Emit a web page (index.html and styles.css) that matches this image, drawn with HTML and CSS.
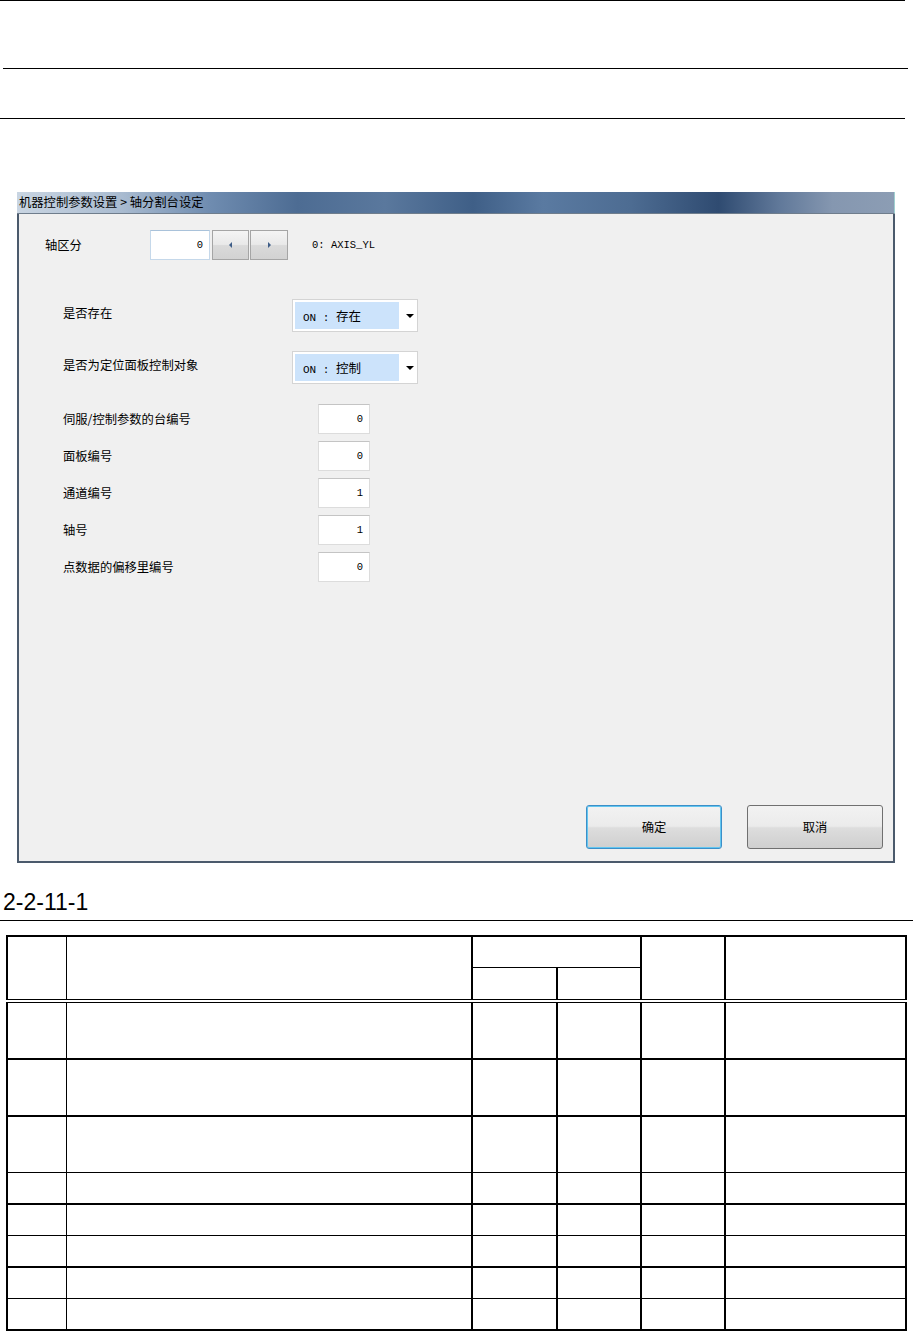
FILE: index.html
```html
<!DOCTYPE html>
<html lang="zh-CN">
<head>
  <meta charset="UTF-8">
  <title>轴分割台设定</title>
  <link rel="stylesheet" href="styles.css">
</head>
<body>
  <div class="rule rule-a"></div>
  <div class="rule rule-b"></div>
  <div class="rule rule-c"></div>

  <div class="dialog">
    <div class="titlebar">机器控制参数设置 &gt; 轴分割台设定</div>
    <div class="dlg-body">
      <div class="axis-row">
        <span class="lbl">轴区分</span>
        <div class="num-input axis-input">0</div>
        <button class="spin"><span class="tri tri-left"></span></button>
        <button class="spin"><span class="tri tri-right"></span></button>
        <span class="axis-name mono">0: AXIS_YL</span>
      </div>

      <div class="sel-row">
        <span class="lbl">是否存在</span>
        <div class="select">
          <div class="value"><span class="mono">ON : </span>存在</div>
          <div class="caret"></div>
        </div>
      </div>
      <div class="sel-row">
        <span class="lbl">是否为定位面板控制对象</span>
        <div class="select">
          <div class="value"><span class="mono">ON : </span>控制</div>
          <div class="caret"></div>
        </div>
      </div>

      <div class="fields">
        <div class="field"><span class="lbl">伺服/控制参数的台编号</span><div class="num-input small">0</div></div>
        <div class="field"><span class="lbl">面板编号</span><div class="num-input small">0</div></div>
        <div class="field"><span class="lbl">通道编号</span><div class="num-input small">1</div></div>
        <div class="field"><span class="lbl">轴号</span><div class="num-input small">1</div></div>
        <div class="field"><span class="lbl">点数据的偏移里编号</span><div class="num-input small">0</div></div>
      </div>

      <div class="actions">
        <button class="btn btn-default">确定</button>
        <button class="btn">取消</button>
      </div>
    </div>
  </div>

  <h3 class="fig-title">2-2-11-1</h3>
  <div class="rule rule-full"></div>

  <table class="spec">
    <colgroup>
      <col style="width:59px"><col style="width:406px"><col style="width:85px">
      <col style="width:84px"><col style="width:84px"><col>
    </colgroup>
    <thead>
      <tr class="h1"><th rowspan="2"></th><th rowspan="2"></th><th colspan="2"></th><th rowspan="2"></th><th rowspan="2"></th></tr>
      <tr class="h2"><th></th><th></th></tr>
    </thead>
    <tbody>
      <tr class="tall thick"><td></td><td></td><td></td><td></td><td></td><td></td></tr>
      <tr class="tall thick"><td></td><td></td><td></td><td></td><td></td><td></td></tr>
      <tr class="tall thick"><td></td><td></td><td></td><td></td><td></td><td></td></tr>
      <tr class="short"><td></td><td></td><td></td><td></td><td></td><td></td></tr>
      <tr class="short thick"><td></td><td></td><td></td><td></td><td></td><td></td></tr>
      <tr class="short"><td></td><td></td><td></td><td></td><td></td><td></td></tr>
      <tr class="short thick"><td></td><td></td><td></td><td></td><td></td><td></td></tr>
      <tr class="short"><td></td><td></td><td></td><td></td><td></td><td></td></tr>
    </tbody>
  </table>
</body>
</html>
```

FILE: styles.css
```css
body {
  margin: 0;
  background: #fff;
  color: #000;
  font-family: "Liberation Sans", "Noto Sans CJK SC", sans-serif;
}

.rule {
  height: 1px;
  background: #000;
}
.rule-a { width: 905px; }
.rule-b { width: 905px; margin: 67px 0 0 3px; }
.rule-c { width: 905px; margin-top: 49px; }
.rule-full { width: 913px; margin-top: 5px; }

/* dialog window */
.dialog {
  width: 878px;
  margin: 73px 0 0 17px;
  font-family: "Noto Sans CJK SC", sans-serif;
  font-size: 12.3px;
}
.titlebar {
  height: 21px;
  line-height: 21px;
  padding-left: 2px;
  border-bottom: 1px solid #6f7d8c;
  border-right: 1px solid #9fd0d0;
  background: linear-gradient(to right, #c9d5e2 0%, #a9bbd0 12%, #6f8cb0 22%, #4d6c93 32%, #5a789d 42%, #3f5f87 52%, #5a7aa1 60%, #4d6c92 70%, #2f4b71 80%, #61799a 87%, #8597b0 93%, #8c9db4 100%);
}
.dlg-body {
  height: 649px;
  box-sizing: border-box;
  display: flex;
  flex-direction: column;
  padding: 16px 10px 12px 0;
  background: #f0f0f0;
  border: 2px solid #4b5a6c;
  border-top: none;
}

.mono {
  font-family: "Liberation Mono", "Noto Sans CJK SC", monospace;
  font-size: 10.5px;
}

.axis-row {
  display: flex;
  align-items: center;
  height: 30px;
  padding-left: 26px;
}
.axis-row .lbl { width: 105px; }

.num-input {
  box-sizing: border-box;
  height: 30px;
  padding-right: 6px;
  background: #fff;
  border: 1px solid #dcdcdc;
  border-top-color: #c4c4c4;
  text-align: right;
  line-height: 28px;
  font-family: "Liberation Mono", monospace;
  font-size: 10.5px;
}
.axis-input {
  width: 60px;
  border-color: #c5d8ea;
  border-top-color: #a9c2da;
}
.num-input.small { width: 52px; }

.spin {
  width: 37px;
  height: 30px;
  margin-left: 2px;
  padding: 0;
  display: flex;
  align-items: center;
  justify-content: center;
  border: 1px solid #a5a5a5;
  background: linear-gradient(#f4f4f4, #e9e9e9 48%, #dadada 52%, #d2d2d2);
}
.spin + .spin { margin-left: 1px; width: 38px; }
.tri {
  width: 0;
  height: 0;
  border-top: 3px solid transparent;
  border-bottom: 3px solid transparent;
}
.tri-left { border-right: 3px solid #3f5e88; }
.tri-right { border-left: 3px solid #3f5e88; }
.axis-name { margin-left: 24px; }

.sel-row {
  display: flex;
  align-items: center;
  padding-left: 44px;
  margin-top: 39px;
}
.sel-row + .sel-row { margin-top: 19px; }
.sel-row .lbl { width: 229px; margin-bottom: 6px; }
.select {
  box-sizing: border-box;
  width: 126px;
  height: 33px;
  padding: 2px;
  display: flex;
  background: #fff;
  border: 1px solid #d4d4d4;
}
.select .value {
  width: 96px;
  padding-left: 8px;
  line-height: 27px;
  background: #cce3fb;
  font-size: 12.5px;
}
.select .value .mono { font-size: 11px; }
.select .caret {
  flex: 1;
  position: relative;
}
.select .caret::after {
  content: "";
  position: absolute;
  left: 7px;
  top: 12px;
  border-left: 4px solid transparent;
  border-right: 4px solid transparent;
  border-top: 4px solid #000;
}

.fields {
  display: flex;
  flex-direction: column;
  gap: 7px;
  margin-top: 20px;
  padding-left: 44px;
}
.field {
  display: flex;
  align-items: center;
}
.field .lbl { width: 255px; }

.actions {
  margin-top: auto;
  display: flex;
  justify-content: flex-end;
  gap: 25px;
}
.btn {
  width: 136px;
  height: 44px;
  border: 1px solid #707070;
  border-radius: 3px;
  background: linear-gradient(#f2f2f2, #ebebeb 48%, #dddddd 52%, #cfcfcf);
  font-family: "Noto Sans CJK SC", sans-serif;
  font-size: 12.3px;
  color: #000;
}
.btn-default {
  border-color: #3c8fc8;
  box-shadow: inset 0 0 0 1px #62c6f0;
}

/* figure + table */
.fig-title {
  margin: 26px 0 0 3px;
  font-family: "Liberation Sans", sans-serif;
  font-weight: normal;
  font-size: 23px;
  line-height: 26px;
}

.spec {
  width: 901px;
  margin: 14px 0 0 6px;
  border-collapse: collapse;
  border: 2px solid #000;
}
.spec th,
.spec td {
  padding: 0;
  border-left: 2px solid #000;
  border-right: 2px solid #000;
  border-top: 1px solid #000;
  border-bottom: 1px solid #000;
}
.spec th:first-child,
.spec td:first-child { border-right-width: 1px; }
.spec th:nth-child(2),
.spec td:nth-child(2) { border-left-width: 1px; }
.spec .h1 th { height: 30px; border-top-width: 2px; }
.spec .h2 th { height: 31px; border-left-width: 2px; }
.spec thead th[rowspan],
.spec .h2 th { border-bottom: 4px double #000; }
.spec .h1 th[colspan] { border-bottom: 1px solid #000; }
.spec tr.thick td { border-top-width: 2px; }
.spec tr.tall td { height: 55px; }
.spec tr.short td { height: 30px; }
```
